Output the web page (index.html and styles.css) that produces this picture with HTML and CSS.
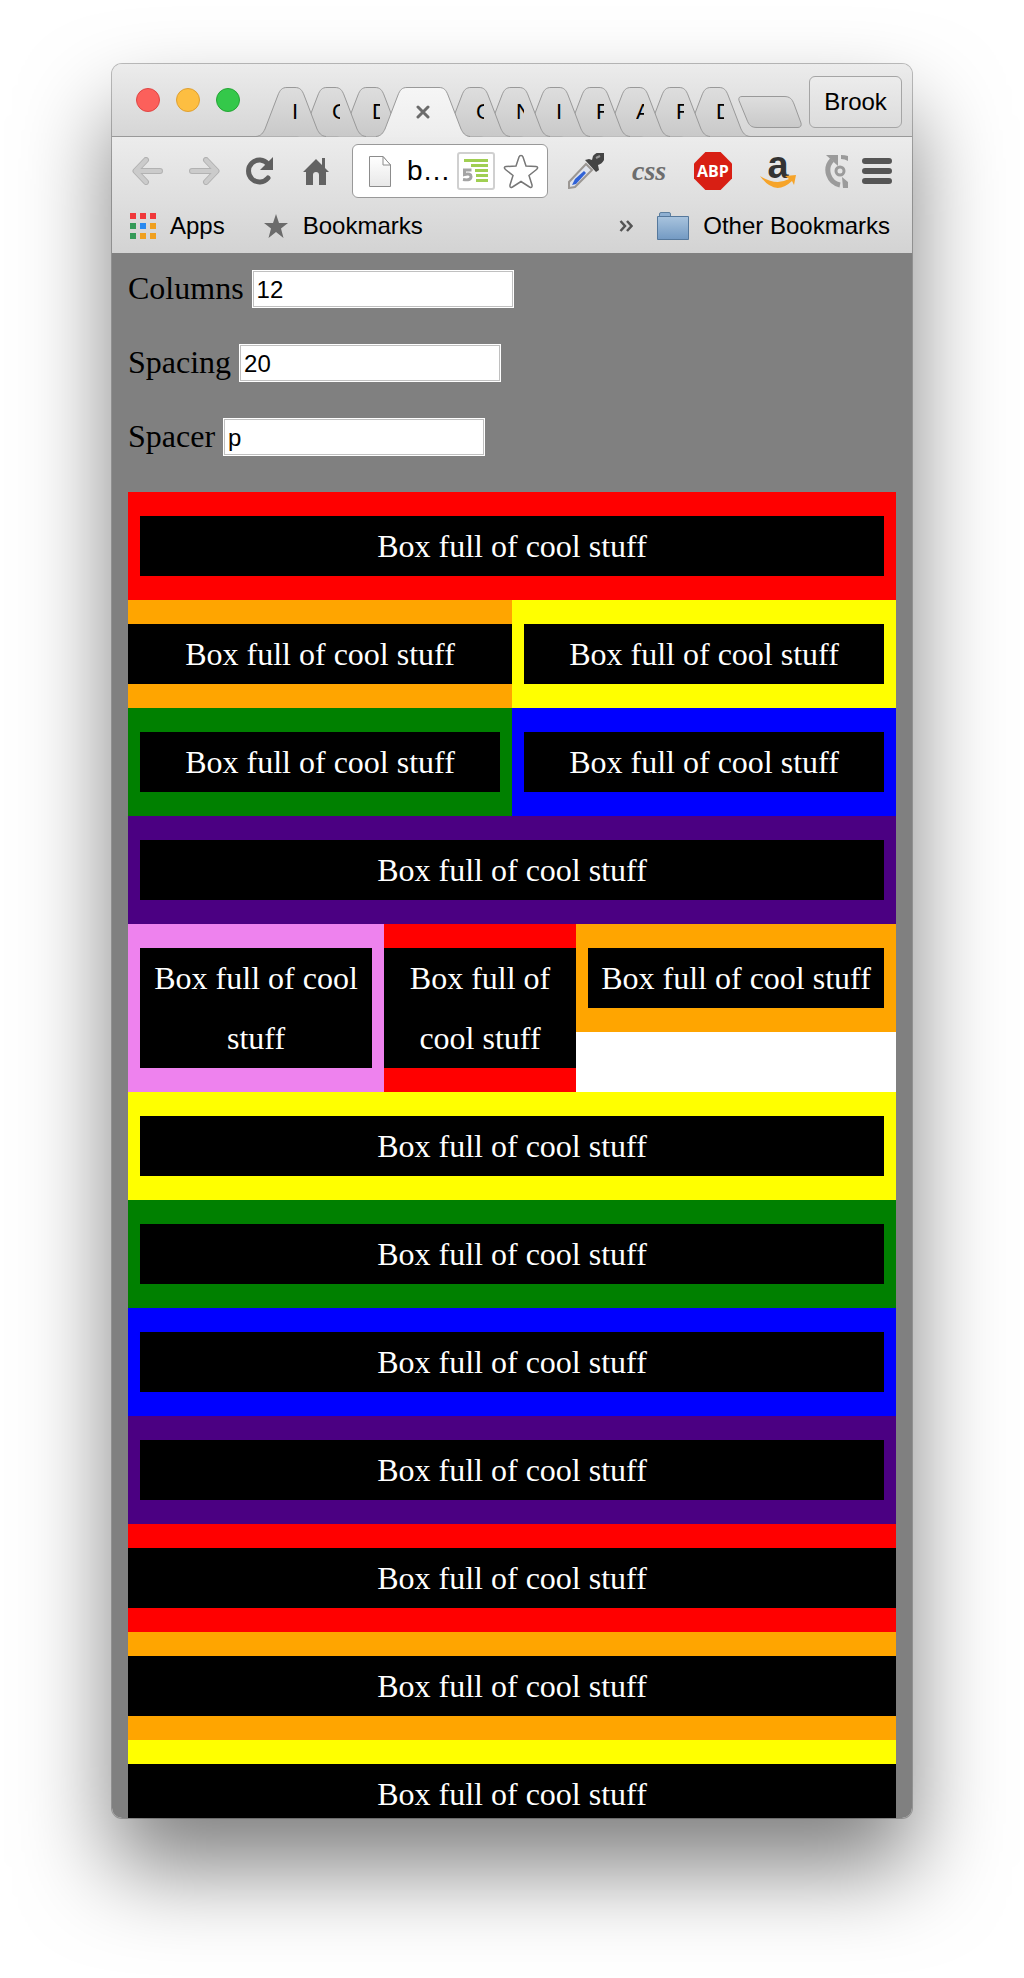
FILE: index.html
```html
<!DOCTYPE html>
<html lang="en">
<head>
<meta charset="utf-8">
<meta name="viewport" content="width=device-width, initial-scale=1">
<title>Box grid</title>
<link rel="stylesheet" href="styles.css">
</head>
<body>
<svg class="defs" aria-hidden="true">
  <defs>
    <linearGradient id="tabFill" x1="0" y1="0" x2="0" y2="1"><stop offset="0" stop-color="#dedede"/><stop offset="1" stop-color="#c9c9c9"/></linearGradient>
    <linearGradient id="activeFill" x1="0" y1="0" x2="0" y2="1"><stop offset="0" stop-color="#f6f6f6"/><stop offset="1" stop-color="#ededed"/></linearGradient>
    <linearGradient id="folderFill" x1="0" y1="0" x2="0" y2="1"><stop offset="0" stop-color="#a9c4de"/><stop offset="1" stop-color="#739ac3"/></linearGradient>
    <linearGradient id="pageFill" x1="0" y1="0" x2="0" y2="1"><stop offset="0" stop-color="#fff"/><stop offset="1" stop-color="#e8e8e8"/></linearGradient>
    <symbol id="tabShape" viewBox="0 0 70 50">
      <path d="M0 49.500C5 49 7 46 9 42L22 8C24 3 26 .5 31 .5H39C44 .5 46 3 48 8L61 42C63 46 65 49 70 49.500Z" fill="url(#tabFill)"/>
      <path d="M0 49.500C5 49 7 46 9 42L22 8C24 3 26 .5 31 .5H39C44 .5 46 3 48 8L61 42C63 46 65 49 70 49.500" fill="none" stroke="#999"/>
    </symbol>
  </defs>
</svg>

<div class="window">
  <header class="chrome">
    <div class="titlebar">
      <div class="lights">
        <button class="light light-close" aria-label="Close"></button>
        <button class="light light-min" aria-label="Minimize"></button>
        <button class="light light-zoom" aria-label="Zoom"></button>
      </div>
      <nav class="tabs">
        <a class="tab" href="#"><svg class="tab-bg"><use href="#tabShape"/></svg><span class="tab-label">I</span></a>
        <a class="tab" href="#"><svg class="tab-bg"><use href="#tabShape"/></svg><span class="tab-label">C</span></a>
        <a class="tab" href="#"><svg class="tab-bg"><use href="#tabShape"/></svg><span class="tab-label">D</span></a>
        <div class="tab tab-active">
          <svg class="tab-bg" viewBox="0 0 94 50">
            <path d="M0 50C5 49 7 46 9 42L22 8C24 3 26 .5 31 .5H63C68 .5 70 3 72 8L85 42C87 46 89 49 94 50Z" fill="url(#activeFill)"/>
            <path d="M0 49.500C5 49 7 46 9 42L22 8C24 3 26 .5 31 .5H63C68 .5 70 3 72 8L85 42C87 46 89 49 94 49.500" fill="none" stroke="#999"/>
          </svg>
          <button class="tab-close" aria-label="Close tab"><svg width="14" height="14" viewBox="0 0 14 14"><path d="M2 2L12 12M12 2L2 12" stroke="#6b6b6b" stroke-width="3" stroke-linecap="round"/></svg></button>
        </div>
        <a class="tab" href="#"><svg class="tab-bg"><use href="#tabShape"/></svg><span class="tab-label">C</span></a>
        <a class="tab" href="#"><svg class="tab-bg"><use href="#tabShape"/></svg><span class="tab-label">N</span></a>
        <a class="tab" href="#"><svg class="tab-bg"><use href="#tabShape"/></svg><span class="tab-label">I</span></a>
        <a class="tab" href="#"><svg class="tab-bg"><use href="#tabShape"/></svg><span class="tab-label">F</span></a>
        <a class="tab" href="#"><svg class="tab-bg"><use href="#tabShape"/></svg><span class="tab-label">A</span></a>
        <a class="tab" href="#"><svg class="tab-bg"><use href="#tabShape"/></svg><span class="tab-label">F</span></a>
        <a class="tab" href="#"><svg class="tab-bg"><use href="#tabShape"/></svg><span class="tab-label">D</span></a>
      </nav>
      <button class="new-tab" aria-label="New tab"><svg width="64" height="32" viewBox="0 0 64 32"><path d="M4 .5H46C52 .5 54 3 56 8L63 27Q64 31 60 31.500H19C13 31.500 11 29 9 24L1 4.500Q0 .5 4 .5Z" fill="url(#tabFill)" stroke="#999"/></svg></button>
      <button class="profile">Brook</button>
    </div>

    <div class="toolbar">
      <div class="nav">
        <button class="icon" aria-label="Back"><svg width="32" height="28" viewBox="0 0 32 28"><path d="M14 3L3.500 14L14 25M5 14H28" fill="none" stroke="#b2b2b2" stroke-width="6" stroke-linecap="round" stroke-linejoin="round"/><path d="M14 3L3.500 14L14 25M5 14H28" fill="none" stroke="#cbcbcb" stroke-width="4" stroke-linecap="round" stroke-linejoin="round"/></svg></button>
        <button class="icon" aria-label="Forward"><svg width="32" height="28" viewBox="0 0 32 28"><path d="M18 3L28.500 14L18 25M27 14H4" fill="none" stroke="#b2b2b2" stroke-width="6" stroke-linecap="round" stroke-linejoin="round"/><path d="M18 3L28.500 14L18 25M27 14H4" fill="none" stroke="#cbcbcb" stroke-width="4" stroke-linecap="round" stroke-linejoin="round"/></svg></button>
        <button class="icon" aria-label="Reload"><svg width="32" height="28" viewBox="0 0 32 28"><path d="M24 21A11 11 0 1 1 24 7" fill="none" stroke="#5f5f5f" stroke-width="5" stroke-linecap="round"/><path d="M29 0V13H16Z" fill="#5f5f5f"/></svg></button>
        <button class="icon" aria-label="Home"><svg width="32" height="28" viewBox="0 0 32 28"><path d="M3 15L16 2L22 8V1H25V11L29 15H26V28H19V18Q19 15 16 15T13 18V28H6V15Z" fill="#636363"/></svg></button>
      </div>
      <div class="omnibox">
        <svg width="22" height="31" viewBox="0 0 22 31"><path d="M.5 .5H14L21.500 9V30.500H.5Z" fill="url(#pageFill)" stroke="#8c8c8c"/><path d="M14 .5V9H21.500Z" fill="#fff" stroke="#8c8c8c"/></svg>
        <a class="address" href="#">b…</a>
        <svg width="38" height="38" viewBox="0 0 38 38"><rect x="1" y="1" width="36" height="36" rx="2" fill="#fff" stroke="#d0d0d0" stroke-width="2"/><path d="M7 8.500H31M14 13.500H31M18 18.500H31M19 23.500H31M19 28.500H31" stroke="#a0cf52" stroke-width="3"/><path d="M14.500 18H7.500V22.500Q14 21 14 24.500Q14 29 6 27.500" fill="none" stroke="#a4a4a4" stroke-width="3"/></svg>
        <svg width="36" height="35" viewBox="0 0 36 35"><path d="M18 1.500Q19.500 1.500 20 3L23 12L33 12.500Q36 13 33.500 15.500L26 21.500L29 31Q29.500 34.500 26.500 33L18 27.500L9.500 33Q6.500 34.500 7 31L10 21.500L2.500 15.500Q0 13 3 12.500L13 12L16 3Q16.500 1.500 18 1.500Z" fill="#fff" stroke="#777" stroke-width="1.500"/></svg>
      </div>
      <div class="extensions">
        <button class="icon" aria-label="Color picker"><svg width="36" height="36" viewBox="0 0 36 36"><path d="M1 35V29L18 11L24 17L7 34Z" fill="#dfe3ec" stroke="#9b9793" stroke-width="2"/><path d="M4 32L7 26L16 18L18 20L8 31Z" fill="#2f61d6"/><path d="M17 7L21 6L24 7L25 3Q29 -2 34 0H36V7Q34 11 30 12L31 17L28 19Z" fill="#444"/><path d="M28 5L32 3" stroke="#999" stroke-width="2"/></svg></button>
        <button class="icon css-ext">css</button>
        <button class="icon abp">ABP</button>
        <button class="icon amazon" aria-label="Amazon"><span class="amazon-a">a</span><svg class="smile" width="36" height="14" viewBox="0 0 36 14"><path d="M0 1Q16 11 29 4L25 1L36 0L34 10L32 6Q15 22 0 1Z" fill="#f6a42a"/></svg></button>
        <div class="menu-group">
          <button class="icon" aria-label="Sync"><svg width="24" height="36" viewBox="0 0 24 36"><path d="M16 32A15 15 0 0 1 8 7" fill="none" stroke="#9b9b9b" stroke-width="5"/><path d="M2 2H14V13Z" fill="#9b9b9b"/><path d="M17 2Q21 2 24 3V8Q21 6 17 6ZM18 24L24 29V35H19Z" fill="#9b9b9b"/><circle cx="16" cy="18" r="4" fill="none" stroke="#9b9b9b" stroke-width="3"/></svg></button>
          <button class="icon" aria-label="Menu"><svg width="30" height="26" viewBox="0 0 30 26"><path d="M3 3H27M3 13H27M3 23H27" stroke="#555" stroke-width="6" stroke-linecap="round"/></svg></button>
        </div>
      </div>
    </div>

    <nav class="bookmarks">
      <a class="bookmark" href="#"><svg width="26" height="26" viewBox="0 0 26 26"><path d="M0 0h6v6h-6zM10 0h6v6h-6zM20 0h6v6h-6z" fill="#f0383b"/><path d="M0 10h6v6h-6zM0 20h6v6h-6z" fill="#349a58"/><path d="M10 10h6v6h-6z" fill="#2989f0"/><path d="M20 10h6v6h-6zM10 20h6v6h-6zM20 20h6v6h-6z" fill="#f0a01f"/></svg>Apps</a>
      <a class="bookmark" href="#"><svg width="26" height="26" viewBox="0 0 26 26"><path d="M13 1L16 10H25L18 15.500L20.500 25L13 19L5.500 25L8 15.500L1 10H10Z" fill="#6b6b6b"/></svg>Bookmarks</a>
      <button class="icon more" aria-label="More bookmarks"><svg width="14" height="12" viewBox="0 0 14 12"><path d="M1.500 1L6 6L1.500 11M8 1L12.500 6L8 11" fill="none" stroke="#555" stroke-width="2.500"/></svg></button>
      <a class="bookmark" href="#"><svg width="32" height="28" viewBox="0 0 32 28"><path d="M2.500 5V2Q2.500 .5 4 .5H12Q13.500 .5 13.500 2V5" fill="#8fb0d2" stroke="#5d7f9f"/><path d="M.5 4.500H31.500V27.500H.5Z" fill="url(#folderFill)" stroke="#55789c"/></svg>Other Bookmarks</a>
    </nav>
  </header>

  <main class="page">
    <form class="settings">
      <div class="field"><label for="columns">Columns</label><input id="columns" type="text" value="12"></div>
      <div class="field"><label for="spacing">Spacing</label><input id="spacing" type="text" value="20"></div>
      <div class="field"><label for="spacer">Spacer</label><input id="spacer" type="text" value="p"></div>
    </form>
    <div class="grid">
      <div class="cell span-12 red"><div class="box">Box full of cool stuff</div></div>
      <div class="cell span-6 orange flush"><div class="box">Box full of cool stuff</div></div>
      <div class="cell span-6 yellow"><div class="box">Box full of cool stuff</div></div>
      <div class="cell span-6 green"><div class="box">Box full of cool stuff</div></div>
      <div class="cell span-6 blue"><div class="box">Box full of cool stuff</div></div>
      <div class="cell span-12 indigo"><div class="box">Box full of cool stuff</div></div>
      <div class="cell span-4 violet"><div class="box">Box full of cool stuff</div></div>
      <div class="cell span-3 red flush"><div class="box">Box full of cool stuff</div></div>
      <div class="cell span-5 orange"><div class="box">Box full of cool stuff</div></div>
      <div class="cell span-12 yellow"><div class="box">Box full of cool stuff</div></div>
      <div class="cell span-12 green"><div class="box">Box full of cool stuff</div></div>
      <div class="cell span-12 blue"><div class="box">Box full of cool stuff</div></div>
      <div class="cell span-12 indigo"><div class="box">Box full of cool stuff</div></div>
      <div class="cell span-12 red flush"><div class="box">Box full of cool stuff</div></div>
      <div class="cell span-12 orange flush"><div class="box">Box full of cool stuff</div></div>
      <div class="cell span-12 yellow flush"><div class="box">Box full of cool stuff</div></div>
    </div>
  </main>
</div>
</body>
</html>
```
FILE: styles.css
```css
* { box-sizing: border-box; }

body {
  margin: 0;
  height: 100vh;
  padding: 64px 112px 160px;
  background: #fff;
  overflow: hidden;
}

svg { display: block; flex: none; }
.defs { position: absolute; width: 0; height: 0; }

button {
  padding: 0;
  border: 0;
  background: none;
  color: inherit;
  font: inherit;
}

a { color: inherit; text-decoration: none; }

.window {
  height: 100%;
  display: flex;
  flex-direction: column;
  overflow: hidden;
  border-radius: 10px;
  box-shadow: 0 0 0 1px rgba(0, 0, 0, .25), 0 50px 90px rgba(0, 0, 0, .5);
}

/* Browser chrome */
.chrome {
  flex: none;
  color: #000;
  font: 24px/28px "Liberation Sans", Arial, sans-serif;
  background: #e0e0e0;
}

.titlebar {
  height: 73px;
  display: flex;
  align-items: flex-end;
  padding: 0 10px 0 24px;
  border-bottom: 1px solid #999;
  background: linear-gradient(#ececec, #d6d6d6);
}

.lights { display: flex; flex: none; gap: 16px; align-self: center; }
.light { width: 24px; height: 24px; border: 1px solid; border-radius: 50%; }
.light-close { background: #fc605b; border-color: #df4644; }
.light-min { background: #fdbe41; border-color: #dfa032; }
.light-zoom { background: #34c84a; border-color: #25a535; }

.tabs { display: flex; flex: none; margin: 0 -12px -1px 16px; isolation: isolate; }

.tab {
  flex: none;
  position: relative;
  width: 70px;
  height: 50px;
  margin-left: -30px;
  display: grid;
}
.tab:first-child { margin-left: 0; z-index: 9; }
.tab:nth-child(2) { z-index: 8; }
.tab:nth-child(3) { z-index: 7; }
.tab:nth-child(5) { z-index: 6; }
.tab:nth-child(6) { z-index: 5; }
.tab:nth-child(7) { z-index: 4; }
.tab:nth-child(8) { z-index: 3; }
.tab:nth-child(9) { z-index: 2; }
.tab:nth-child(10) { z-index: 1; }
.tab-active { width: 94px; z-index: 10; }
.tab > * { grid-area: 1 / 1; }
.tab-bg { width: 100%; height: 100%; }
.tab-label {
  width: 8px;
  height: 28px;
  margin: 11px 0 0 36px;
  overflow: hidden;
  font-size: 22px;
}
.tab-close { place-self: center; }

.new-tab { flex: none; margin-bottom: 8px; }

.profile {
  flex: none;
  width: 93px;
  height: 52px;
  margin: 0 0 8px auto;
  border: 1px solid #a5a5a5;
  border-radius: 6px;
  background: linear-gradient(#ececec, #dcdcdc);
}

.toolbar {
  display: flex;
  align-items: center;
  gap: 20px;
  padding: 7px 20px 0;
  background: linear-gradient(#ececec, #dfdfdf);
}

.nav { display: flex; gap: 24px; }
.icon { display: grid; place-items: center; flex: none; }

.omnibox {
  flex: 1;
  min-width: 0;
  height: 54px;
  display: flex;
  align-items: center;
  gap: 8px;
  padding: 0 8px 0 16px;
  border: 1px solid #999;
  border-radius: 6px;
  background: #fff;
}
.address {
  flex: 1;
  min-width: 0;
  padding-left: 8px;
  overflow: hidden;
  white-space: nowrap;
  font-size: 28px;
  line-height: 36px;
}

.extensions { display: flex; align-items: center; gap: 28px; }
.menu-group { display: flex; align-items: center; gap: 14px; }

.css-ext {
  width: 34px;
  color: #6d6d6d;
  font: italic bold 28px/30px "Liberation Serif", serif;
}
.abp {
  width: 38px;
  height: 38px;
  color: #fff;
  background: #d81f14;
  clip-path: polygon(30% 0, 70% 0, 100% 30%, 100% 70%, 70% 100%, 30% 100%, 0 70%, 0 30%);
  font: bold 16px/20px "Open Sans", sans-serif;
}
.amazon { width: 36px; height: 36px; color: #333; }
.amazon > * { grid-area: 1 / 1; }
.amazon-a { font: bold 38px/36px "Liberation Sans", sans-serif; align-self: start; margin-top: -6px; }
.smile { align-self: end; }

.bookmarks {
  height: 55px;
  display: flex;
  align-items: center;
  gap: 24px;
  padding: 0 22px 0 18px;
  background: linear-gradient(#dfdfdf, #d3d3d3);
}
.bookmark { display: flex; align-items: center; gap: 14px; white-space: nowrap; }
.bookmark:nth-child(2) { margin-left: 14px; }
.more { margin-left: auto; }

/* Page content */
.page {
  flex: 1;
  min-height: 0;
  overflow: hidden;
  padding: 17px 16px 0;
  background: #808080;
  font: 32px/36px "Liberation Serif", "Times New Roman", serif;
}

.settings { display: grid; gap: 36px; margin-bottom: 36px; }
.field { display: flex; align-items: center; gap: 8px; height: 38px; }
.field label { line-height: 34px; padding-bottom: 2px; }
.field input {
  width: 262px;
  height: 38px;
  padding: 2px 4px 0;
  border: 1px solid #fff;
  outline: 1px solid #c0c0c0;
  outline-offset: -2px;
  border-radius: 0;
  background: #fff;
  color: #000;
  font: 24px/28px "Liberation Sans", Arial, sans-serif;
}

.grid {
  display: grid;
  grid-template-columns: repeat(12, 1fr);
  align-items: start;
  background: #fff;
}
.cell { padding: 24px 12px; }
.flush { padding-left: 0; padding-right: 0; }
.box {
  background: #000;
  color: #fff;
  line-height: 60px;
  text-align: center;
}

.span-3 { grid-column: span 3; }
.span-4 { grid-column: span 4; }
.span-5 { grid-column: span 5; }
.span-6 { grid-column: span 6; }
.span-12 { grid-column: span 12; }

.red { background: red; }
.orange { background: orange; }
.yellow { background: yellow; }
.green { background: green; }
.blue { background: blue; }
.indigo { background: indigo; }
.violet { background: violet; }
```
